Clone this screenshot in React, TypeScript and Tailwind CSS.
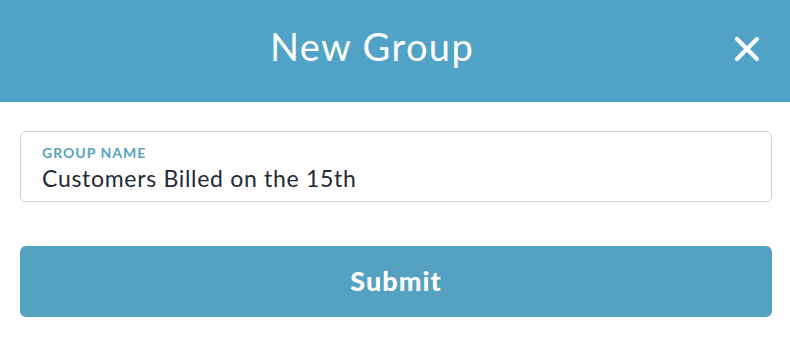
import { X } from "lucide-react";

export default function App() {
  return (
    <div className="h-[360px] w-[790px] bg-white font-['Lato',sans-serif]">
      <div className="relative flex h-[102px] items-center justify-center bg-[#50a3c7] pb-[10px] pr-[46px]">
        <h1 className="text-[38px] font-normal tracking-[1.4px] text-white">New Group</h1>
        <button className="absolute right-[23px] top-[29px] text-white">
          <X size={40} strokeWidth={2.5} />
        </button>
      </div>

      <div className="pl-5 pr-[18px] pt-[29px]">
        <div className="flex h-[71px] flex-col rounded-[6px] border border-[#d2d2d2] px-[21px] pt-[10px]">
          <label className="text-[14px] font-bold tracking-[1px] text-[#55a3c2]">GROUP NAME</label>
          <div className="-mt-[2px] text-[23px] tracking-[0.7px] text-[#1f2a36]">Customers Billed on the 15th</div>
        </div>

        <button className="mt-[44px] flex h-[71px] w-full items-center justify-center rounded-[6px] bg-[#55a1c1] text-[27px] font-black tracking-[1px] text-white">
          Submit
        </button>
      </div>
    </div>
  );
}
